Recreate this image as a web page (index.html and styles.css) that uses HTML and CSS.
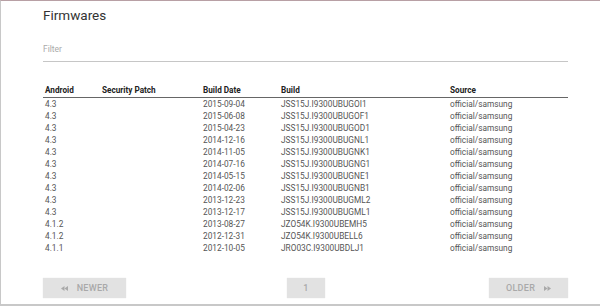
FILE: index.html
```html
<!DOCTYPE html>
<html>
<head>
<meta charset="utf-8">
<link rel="stylesheet" href="styles.css">
</head>
<body>
<div class="frame">
  <h1 class="title">Firmwares</h1>
  <div class="filter">Filter</div>
  <table class="fw">
    <colgroup>
      <col class="c-android"><col class="c-patch"><col class="c-date"><col class="c-build"><col class="c-source">
    </colgroup>
    <thead>
      <tr><th>Android</th><th>Security Patch</th><th>Build Date</th><th>Build</th><th>Source</th></tr>
    </thead>
    <tbody>
      <tr><td>4.3</td><td></td><td>2015-09-04</td><td>JSS15J.I9300UBUGOI1</td><td>official/samsung</td></tr>
      <tr><td>4.3</td><td></td><td>2015-06-08</td><td>JSS15J.I9300UBUGOF1</td><td>official/samsung</td></tr>
      <tr><td>4.3</td><td></td><td>2015-04-23</td><td>JSS15J.I9300UBUGOD1</td><td>official/samsung</td></tr>
      <tr><td>4.3</td><td></td><td>2014-12-16</td><td>JSS15J.I9300UBUGNL1</td><td>official/samsung</td></tr>
      <tr><td>4.3</td><td></td><td>2014-11-05</td><td>JSS15J.I9300UBUGNK1</td><td>official/samsung</td></tr>
      <tr><td>4.3</td><td></td><td>2014-07-16</td><td>JSS15J.I9300UBUGNG1</td><td>official/samsung</td></tr>
      <tr><td>4.3</td><td></td><td>2014-05-15</td><td>JSS15J.I9300UBUGNE1</td><td>official/samsung</td></tr>
      <tr><td>4.3</td><td></td><td>2014-02-06</td><td>JSS15J.I9300UBUGNB1</td><td>official/samsung</td></tr>
      <tr><td>4.3</td><td></td><td>2013-12-23</td><td>JSS15J.I9300UBUGML2</td><td>official/samsung</td></tr>
      <tr><td>4.3</td><td></td><td>2013-12-17</td><td>JSS15J.I9300UBUGML1</td><td>official/samsung</td></tr>
      <tr><td>4.1.2</td><td></td><td>2013-08-27</td><td>JZO54K.I9300UBEMH5</td><td>official/samsung</td></tr>
      <tr><td>4.1.2</td><td></td><td>2012-12-31</td><td>JZO54K.I9300UBELL6</td><td>official/samsung</td></tr>
      <tr><td>4.1.1</td><td></td><td>2012-10-05</td><td>JRO03C.I9300UBDLJ1</td><td>official/samsung</td></tr>
    </tbody>
  </table>
  <div class="pager">
    <div class="btn btn-newer">
      <svg class="ico" width="7" height="5" viewBox="0 0 7 5"><polygon points="3.5,0 3.5,5 0,2.5" fill="#a9a9a9"/><polygon points="7,0 7,5 3.5,2.5" fill="#a9a9a9"/></svg>
      <span>NEWER</span>
    </div>
    <div class="btn btn-page">1</div>
    <div class="btn btn-older">
      <span>OLDER</span>
      <svg class="ico" width="7" height="5" viewBox="0 0 7 5"><polygon points="0,0 0,5 3.5,2.5" fill="#a9a9a9"/><polygon points="3.5,0 3.5,5 7,2.5" fill="#a9a9a9"/></svg>
    </div>
  </div>
</div>
</body>
</html>
```
FILE: styles.css
```css
html, body {
  margin: 0;
  padding: 0;
  background: #fff;
}
body {
  font-family: Roboto, "Liberation Sans", sans-serif;
  width: 600px;
  height: 307px;
  overflow: hidden;
}
.frame {
  box-sizing: border-box;
  width: 600px;
  height: 306px;
  border-top: 1px solid #b8a0a5;
  border-left: 1px solid #c8c8c8;
  border-bottom: 2px solid #c8c8c8;
  padding: 0 32px 0 42px;
  display: flex;
  flex-direction: column;
}
.title {
  margin: 6px 0 0 0;
  font-size: 13.5px;
  line-height: 16px;
  font-weight: 400;
  color: #333;
}
.filter {
  margin-top: 20px;
  font-size: 8.5px;
  line-height: 12px;
  color: #aaa;
  padding-bottom: 6px;
  border-bottom: 1px solid #c6c6c6;
}
.fw {
  margin-top: 23px;
  width: 100%;
  table-layout: fixed;
  border-collapse: collapse;
  border-spacing: 0;
}
.c-android { width: 57px; }
.c-patch { width: 101px; }
.c-date { width: 78px; }
.c-build { width: 169px; }
.c-source { width: auto; }
.fw th {
  text-align: left;
  font-size: 8.2px;
  font-weight: 700;
  line-height: 10px;
  color: #222;
  padding: 0 2px 2px 2px;
  border-bottom: 1px solid #666;
}
.fw td {
  font-size: 8.3px;
  line-height: 12px;
  height: 12px;
  padding: 0 2px;
  color: #555;
  white-space: nowrap;
}
.pager {
  margin-top: 24px;
  display: flex;
  justify-content: space-between;
  align-items: center;
}
.btn {
  height: 20px;
  background: #e2e2e2;
  color: #a9a9a9;
  font-size: 9px;
  font-weight: 500;
  letter-spacing: 0.3px;
  display: flex;
  align-items: center;
  justify-content: center;
  gap: 9px;
  box-shadow: 0 0 1px rgba(0,0,0,0.12);
}
.btn-newer { width: 83px; }
.btn-page { width: 38px; margin-right: 3px; }
.btn-older { width: 79px; }
.ico { display: block; }
```
